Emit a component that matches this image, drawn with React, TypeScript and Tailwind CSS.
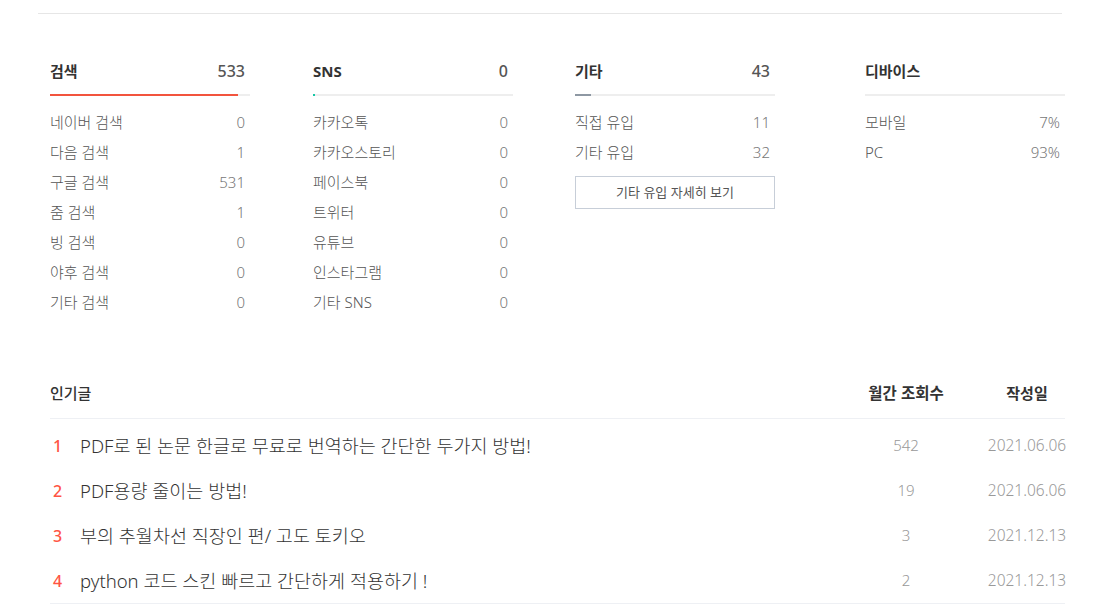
const font = { fontFamily: '"Noto Sans", "Noto Sans CJK KR", sans-serif' }

type Item = { label: string; value: string }
type Group = {
  title: string
  total?: string
  pct: number
  bar: string
  items: Item[]
  more?: string
}

const groups: Group[] = [
  {
    title: '검색',
    total: '533',
    pct: 94,
    bar: 'bg-[#f2543e]',
    items: [
      { label: '네이버 검색', value: '0' },
      { label: '다음 검색', value: '1' },
      { label: '구글 검색', value: '531' },
      { label: '줌 검색', value: '1' },
      { label: '빙 검색', value: '0' },
      { label: '야후 검색', value: '0' },
      { label: '기타 검색', value: '0' },
    ],
  },
  {
    title: 'SNS',
    total: '0',
    pct: 1,
    bar: 'bg-[#16c7a6]',
    items: [
      { label: '카카오톡', value: '0' },
      { label: '카카오스토리', value: '0' },
      { label: '페이스북', value: '0' },
      { label: '트위터', value: '0' },
      { label: '유튜브', value: '0' },
      { label: '인스타그램', value: '0' },
      { label: '기타 SNS', value: '0' },
    ],
  },
  {
    title: '기타',
    total: '43',
    pct: 8,
    bar: 'bg-[#8e98a3]',
    items: [
      { label: '직접 유입', value: '11' },
      { label: '기타 유입', value: '32' },
    ],
    more: '기타 유입 자세히 보기',
  },
  {
    title: '디바이스',
    pct: 0,
    bar: 'bg-[#8e98a3]',
    items: [
      { label: '모바일', value: '7%' },
      { label: 'PC', value: '93%' },
    ],
  },
]

const posts = [
  { title: 'PDF로 된 논문 한글로 무료로 번역하는 간단한 두가지 방법!', views: '542', date: '2021.06.06' },
  { title: 'PDF용량 줄이는 방법!', views: '19', date: '2021.06.06' },
  { title: '부의 추월차선 직장인 편/ 고도 토키오', views: '3', date: '2021.12.13' },
  { title: 'python 코드 스킨 빠르고 간단하게 적용하기 !', views: '2', date: '2021.12.13' },
]

function StatColumn({ group, className }: { group: Group; className?: string }) {
  return (
    <div className={`w-[200px] ${className ?? ''}`}>
      <div className="flex h-[24px] items-center justify-between pr-[5px]">
        <span className="text-[15px] font-bold text-[#333]">{group.title}</span>
        {group.total && <span className="text-[16px] font-medium text-[#555]">{group.total}</span>}
      </div>
      <div className="mt-[11px] h-[2px] bg-[#eeeeee]">
        {group.pct > 0 && (
          <div className={`h-full ${group.bar}`} style={{ width: `${group.pct}%` }} />
        )}
      </div>
      <ul className="mt-[11px]">
        {group.items.map((it) => (
          <li key={it.label} className="flex h-[30px] items-center justify-between pr-[5px] text-[15px] font-light">
            <span className="text-[#555]">{it.label}</span>
            <span className="text-[#777]">{it.value}</span>
          </li>
        ))}
      </ul>
      {group.more && (
        <button
          type="button"
          className="mt-[9px] h-[33px] w-full border border-[#c7ced8] bg-white text-[13px] text-[#555]"
        >
          {group.more}
        </button>
      )}
    </div>
  )
}

export default function App() {
  return (
    <div className="h-[607px] w-[1100px] overflow-hidden bg-white" style={font}>
      <div className="mx-[38px] mt-[13px] border-t border-[#e6e6e6]" />

      <div className="mt-[45px] flex pl-[50px] pr-[35px]">
        <StatColumn group={groups[0]} />
        <StatColumn group={groups[1]} className="ml-[63px]" />
        <StatColumn group={groups[2]} className="ml-[62px]" />
        <StatColumn group={groups[3]} className="ml-auto" />
      </div>

      <div className="mx-[50px] mr-[35px] mt-[64px]">
        <div className="flex h-[38px] items-start border-b border-[#eef0f4] text-[15px] text-[#333]">
          <span className="flex-1 leading-[24px] font-medium">인기글</span>
          <span className="w-[100px] text-center text-[15.5px] leading-[24px] font-bold">월간 조회수</span>
          <span className="ml-[29px] mr-[-4px] w-[84px] text-center leading-[24px] font-bold">작성일</span>
        </div>
        <ul className="border-b border-[#eef0f4] pt-[4px]">
          {posts.map((p, i) => (
            <li key={p.title} className="flex h-[45px] items-center">
              <span className="w-[30px] pl-[3px] text-[16px] font-medium text-[#ff5544]">{i + 1}</span>
              <span className="flex-1 text-[18.5px] font-light text-[#333]">{p.title}</span>
              <span className="w-[100px] text-center text-[15px] font-light text-[#999]">{p.views}</span>
              <span className="ml-[27px] mr-[-6px] w-[88px] text-center text-[15.5px] font-light text-[#999]">{p.date}</span>
            </li>
          ))}
        </ul>
      </div>
    </div>
  )
}
